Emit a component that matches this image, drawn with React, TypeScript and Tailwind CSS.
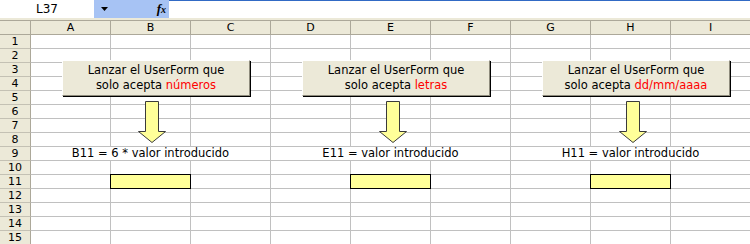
import React from "react";

const COLS = ["A", "B", "C", "D", "E", "F", "G", "H", "I"];
const ROWS = Array.from({ length: 15 }, (_, i) => i + 1);
const YELLOW_COLS = ["B", "E", "H"];

const SECTIONS = [
  { kind: "números", formula: "B11 = 6 * valor introducido" },
  { kind: "letras", formula: "E11 = valor introducido" },
  { kind: "dd/mm/aaaa", formula: "H11 = valor introducido" },
];

const BUTTON_LEFT = ["left-[62px]", "left-[302px]", "left-[542px]"];
const ARROW_LEFT = ["left-[137px]", "left-[378px]", "left-[618px]"];

function Arrow({ className }: { className: string }) {
  return (
    <svg
      width="30"
      height="44"
      viewBox="0 0 30 44"
      className={`absolute top-[100px] ${className}`}
    >
      <path
        d="M8.5 1.5 H21.5 V31.5 H28.5 L15 42.5 L1.5 31.5 H8.5 Z"
        fill="#ffff99"
        stroke="#3a3a3a"
        strokeWidth="1"
      />
    </svg>
  );
}

function LaunchButton({ kind, className }: { kind: string; className: string }) {
  return (
    <div
      className={`absolute top-[60px] flex h-[36px] w-[188px] flex-col items-center justify-center border-t border-l border-t-white border-l-white border-r border-b border-r-[#8e8b7c] border-b-[#8e8b7c] bg-[#ece9d8] text-[11.5px] leading-[15px] text-black shadow-[1px_1px_0_0_#000] ${className}`}
    >
      <span>Lanzar el UserForm que</span>
      <span>
        solo acepta <span className="text-[#ff0000]">{kind}</span>
      </span>
    </div>
  );
}

export default function App() {
  return (
    <div className="relative h-[244px] w-[750px] overflow-hidden bg-[#ece9d8] font-['DejaVu_Sans',sans-serif] text-black">
      {/* Barra de fórmulas */}
      <div className="flex h-[18px] bg-white">
        <div className="flex w-[94px] items-center justify-center text-[12px]">L37</div>
        <div className="flex w-[75px] items-center bg-[#a7c3f4]">
          <svg width="8" height="4" viewBox="0 0 8 4" className="ml-[7px]">
            <path d="M0 0 H7 L3.5 4 Z" fill="#000" />
          </svg>
          <span className="ml-auto mr-[3px] font-['Liberation_Serif',serif] text-[13px] font-bold italic">
            f<span className="text-[10px]">x</span>
          </span>
        </div>
        <div className="flex-1 border-t border-[#316ac5]" />
      </div>
      <div className="h-[2px]" />

      {/* Hoja */}
      <div className="grid grid-cols-[31px_repeat(9,80px)] grid-rows-[15px_repeat(15,14px)] text-[11.5px] leading-[13px]">
        <div className="border-t border-r border-b border-[#aca899] bg-[#ece9d8]" />
        {COLS.map((c) => (
          <div
            key={c}
            className="flex items-center justify-center border-t border-r border-b border-[#aca899] bg-[#ece9d8] text-[11px]"
          >
            {c}
          </div>
        ))}

        {ROWS.map((r) => (
          <React.Fragment key={r}>
            <div className="flex items-center justify-center border-r border-b border-r-[#aca899] border-b-[#c4c1b4] bg-[#ece9d8] text-[11px]">
              {r}
            </div>
            {r === 9
              ? SECTIONS.map((s) => (
                  <div
                    key={s.formula}
                    className="col-span-3 flex items-center justify-center border-r border-b border-[#c0c0c0] bg-white"
                  >
                    {s.formula}
                  </div>
                ))
              : COLS.map((c) =>
                  r === 11 && YELLOW_COLS.includes(c) ? (
                    <div
                      key={c}
                      className="relative z-10 border-r border-b border-black bg-[#ffff99] shadow-[-1px_0_0_0_#000,0_-1px_0_0_#000,-1px_-1px_0_0_#000]"
                    />
                  ) : (
                    <div key={c} className="border-r border-b border-[#c0c0c0] bg-white" />
                  )
                )}
          </React.Fragment>
        ))}
      </div>

      {SECTIONS.map((s, i) => (
        <LaunchButton key={s.kind} kind={s.kind} className={BUTTON_LEFT[i]} />
      ))}
      {SECTIONS.map((s, i) => (
        <Arrow key={s.kind} className={ARROW_LEFT[i]} />
      ))}
    </div>
  );
}
